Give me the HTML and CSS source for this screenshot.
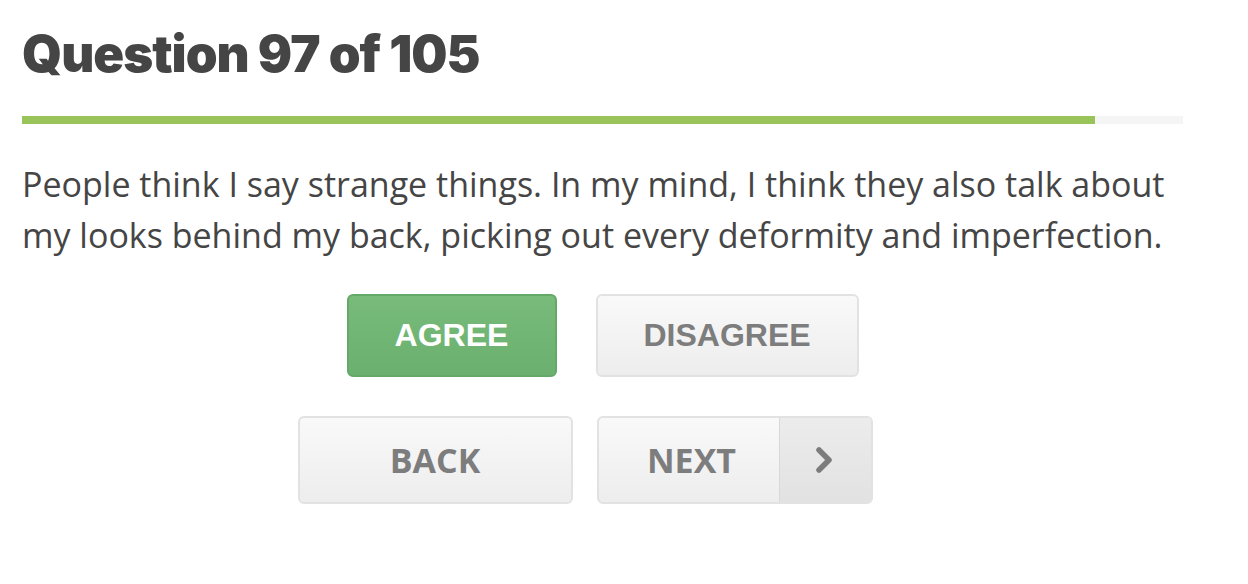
FILE: index.html
```html
<!DOCTYPE html>
<html lang="en">
<head>
<meta charset="utf-8">
<title>Question 97 of 105</title>
<link rel="stylesheet" href="styles.css">
</head>
<body>
<main class="quiz">
  <h1 class="quiz-title">Question 97 of 105</h1>
  <div class="progress"><div class="progress-fill" style="width: 92.4%"></div></div>
  <p class="question">People think I say strange things. In my mind, I think they also talk about my looks behind my back, picking out every deformity and imperfection.</p>
  <div class="answers">
    <button class="btn btn-agree">AGREE</button>
    <button class="btn btn-disagree">DISAGREE</button>
  </div>
  <div class="nav">
    <button class="btn nav-btn btn-back">BACK</button>
    <button class="btn nav-btn btn-next"><span class="next-label">NEXT</span><span class="next-arrow"><svg width="20" height="28" viewBox="0 0 20 28"><path d="M4 4 L14 14 L4 24" fill="none" stroke="#7c7c7c" stroke-width="5.5" stroke-linecap="round" stroke-linejoin="round"/></svg></span></button>
  </div>
</main>
</body>
</html>
```
FILE: styles.css
```css
* { box-sizing: border-box; }
html, body { margin: 0; padding: 0; background: #ffffff; }
.quiz {
  width: 1161px;
  margin-left: 22px;
  padding-top: 26px;
}
.quiz-title {
  margin: 0;
  font-family: "Inter", "Liberation Sans", sans-serif;
  font-weight: 900;
  font-size: 51px;
  line-height: 56px;
  letter-spacing: -1px;
  color: #454545;
}
.progress {
  margin-top: 34px;
  height: 8px;
  background: #f5f5f5;
}
.progress-fill {
  height: 100%;
  background: #98c45a;
}
.question {
  margin: 35px 0 0;
  font-family: "Open Sans", sans-serif;
  font-size: 34px;
  line-height: 51px;
  color: #454545;
}
.answers {
  display: flex;
  justify-content: center;
  gap: 39px;
  margin-top: 33px;
}
.btn {
  border-radius: 6px;
  cursor: pointer;
  padding: 0;
}
.btn-agree, .btn-disagree {
  height: 83px;
  font-family: "Liberation Sans", Arial, sans-serif;
  font-weight: 700;
  font-size: 32px;
}
.btn-agree {
  width: 210px;
  color: #ffffff;
  background: linear-gradient(#78bb7b, #6bb06e);
  border: 2px solid #64a967;
}
.btn-disagree {
  width: 263px;
  color: #7d7d7d;
  background: linear-gradient(#f9f9f9, #ededed);
  border: 2px solid #e2e2e2;
}
.nav {
  display: flex;
  justify-content: center;
  gap: 24px;
  margin-top: 39px;
  padding-right: 35px;
}
.nav-btn {
  width: 275px;
  height: 88px;
  font-family: "Open Sans", sans-serif;
  font-weight: 700;
  font-size: 34px;
  color: #7d7d7d;
  background: linear-gradient(#f9f9f9, #ededed);
  border: 2px solid #e2e2e2;
}
.btn-next {
  width: 276px;
  display: flex;
  align-items: stretch;
  overflow: hidden;
}
.next-label {
  flex: 1;
  display: flex;
  align-items: center;
  justify-content: center;
  padding-left: 6px;
}
.next-arrow {
  width: 92px;
  display: flex;
  align-items: center;
  justify-content: center;
  background: linear-gradient(#ececec, #e2e2e2);
  border-left: 1px solid #d8d8d8;
}
```
